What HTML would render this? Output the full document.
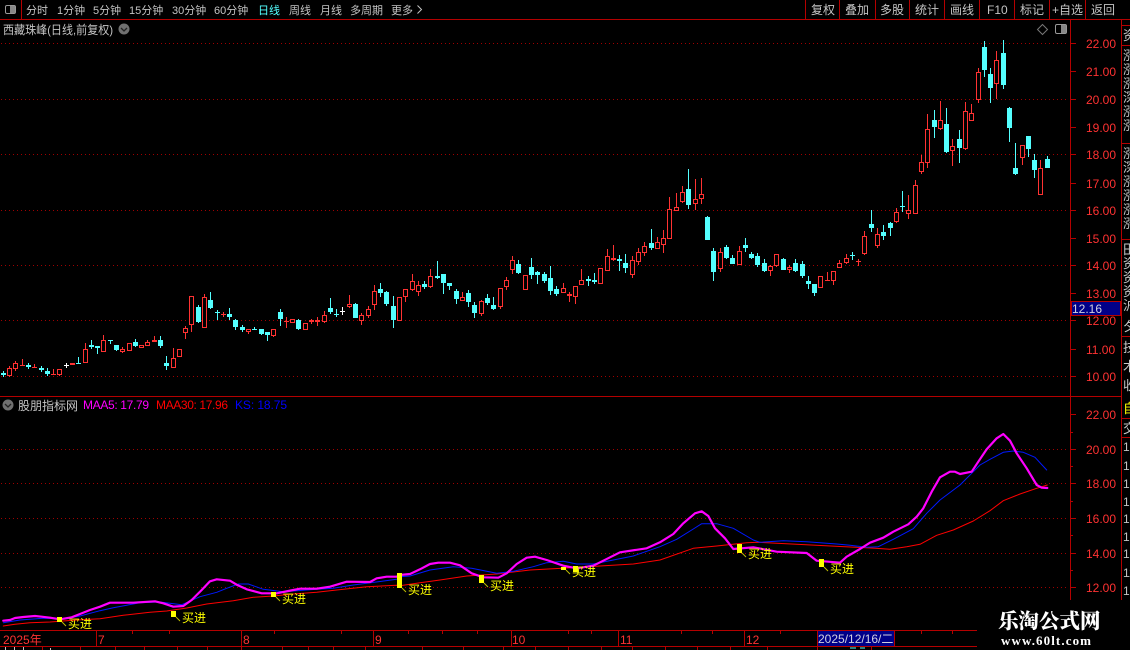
<!DOCTYPE html>
<html>
<head>
<meta charset="utf-8">
<title>股票K线</title>
<style>
html,body{margin:0;padding:0;background:#000;width:1130px;height:650px;overflow:hidden}
svg{display:block;position:absolute;left:0;top:0}
text{font-family:"Liberation Sans","WenQuanYi Zen Hei","Noto Sans CJK SC",sans-serif}
.t{font-size:11px;fill:#c4c4c4}
.r{font-size:12px;fill:#c4c4c4}
.p{font-size:12px;fill:#ff3232}
.y{font-size:12px;fill:#ffff00}
.d{font-size:12px;fill:#ff3232}
.s{font-size:13px;fill:#c8c8c8}
.f{stroke:#b40000;stroke-width:1;fill:none;shape-rendering:crispEdges}
</style>
</head>
<body>
<svg width="1130" height="650" viewBox="0 0 1130 650" xmlns="http://www.w3.org/2000/svg">
<defs>
<pattern id="dot" x="0" y="0" width="4" height="1" patternUnits="userSpaceOnUse"><rect x="1" y="0" width="1" height="1" fill="#a00000"/></pattern>
</defs>
<rect width="1130" height="650" fill="#000"/>

<!-- frame -->
<path class="f" d="M0 19.5H1130M0 396.5H1122M21.5 0V19M805.5 0V19M839.5 0V19M875.5 0V19M909.5 0V19M944.5 0V19M979.5 0V19M1014.5 0V19M1049.5 0V19M1085.5 0V19"/>
<path class="f" d="M1070.5 19V600M1121.5 19V600"/>
<path class="f" d="M1122 25.5H1130M1122 45.5H1130M1122 143.5H1130M1122 239.5H1130M1122 336.5H1130M1122 418.5H1130M1122 437.5H1130"/>
<path class="f" d="M1071 43.5h5M1071 71.5h5M1071 99.5h5M1071 127.5h5M1071 154.5h5M1071 183.5h5M1071 210.5h5M1071 238.5h5M1071 265.5h5M1071 293.5h5M1071 320.5h5M1071 349.5h5M1071 376.5h5"/>
<path class="f" d="M1071 414.5h5M1071 432.5h2M1071 449.5h5M1071 466.5h2M1071 483.5h5M1071 501.5h2M1071 518.5h5M1071 535.5h2M1071 553.5h5M1071 570.5h2M1071 587.5h5"/>
<!-- grid -->
<g fill="url(#dot)" shape-rendering="crispEdges">
<rect x="0" y="43" width="1068" height="1"/><rect x="0" y="99" width="1068" height="1"/><rect x="0" y="154" width="1068" height="1"/><rect x="0" y="210" width="1068" height="1"/><rect x="0" y="265" width="1068" height="1"/><rect x="0" y="320" width="1068" height="1"/><rect x="0" y="376" width="1068" height="1"/>
<rect x="0" y="449" width="1068" height="1"/><rect x="0" y="483" width="1068" height="1"/><rect x="0" y="518" width="1068" height="1"/><rect x="0" y="553" width="1068" height="1"/><rect x="0" y="587" width="1068" height="1"/>
</g>

<!-- toolbar left -->
<rect x="5.5" y="5.5" width="10" height="8" rx="1.5" fill="none" stroke="#999"/>
<rect x="10" y="6" width="5" height="7" fill="#888"/>
<text class="t" x="26" y="14">分时</text>
<text class="t" x="57" y="14">1分钟</text>
<text class="t" x="93" y="14">5分钟</text>
<text class="t" x="129" y="14">15分钟</text>
<text class="t" x="172" y="14">30分钟</text>
<text class="t" x="214" y="14">60分钟</text>
<text class="t" x="258" y="14" style="fill:#54ffff">日线</text>
<text class="t" x="289" y="14">周线</text>
<text class="t" x="320" y="14">月线</text>
<text class="t" x="350" y="14">多周期</text>
<text class="t" x="391" y="14">更多</text>
<path d="M417.5 5.5L421.5 9.5L417.5 13.5" fill="none" stroke="#c4c4c4"/>

<!-- toolbar right -->
<text class="r" x="811" y="14">复权</text>
<text class="r" x="845" y="14">叠加</text>
<text class="r" x="880" y="14">多股</text>
<text class="r" x="915" y="14">统计</text>
<text class="r" x="950" y="14">画线</text>
<text class="r" x="987" y="14">F10</text>
<text class="r" x="1020" y="14">标记</text>
<text class="r" x="1052" y="14">+自选</text>
<text class="r" x="1091" y="14">返回</text>

<!-- title -->
<text class="r" x="3" y="34" textLength="110" lengthAdjust="spacingAndGlyphs">西藏珠峰(日线,前复权)</text>
<circle cx="124" cy="29" r="5.5" fill="#707070"/>
<path d="M121 28l3 3 3-3" fill="none" stroke="#222" stroke-width="1.3"/>
<path d="M1042.5 24.5l5 5-5 5-5-5z" fill="none" stroke="#777"/>
<rect x="1055.5" y="24.5" width="11" height="9" rx="1.5" fill="none" stroke="#999"/>
<rect x="1061" y="25" width="5" height="8" fill="#888"/>

<!-- main axis labels -->
<text class="p" x="1086" y="48">22.00</text>
<text class="p" x="1086" y="76">21.00</text>
<text class="p" x="1086" y="104">20.00</text>
<text class="p" x="1086" y="132">19.00</text>
<text class="p" x="1086" y="159">18.00</text>
<text class="p" x="1086" y="188">17.00</text>
<text class="p" x="1086" y="215">16.00</text>
<text class="p" x="1086" y="243">15.00</text>
<text class="p" x="1086" y="270">14.00</text>
<text class="p" x="1086" y="298">13.00</text>
<text class="p" x="1086" y="325">12.00</text>
<text class="p" x="1086" y="354">11.00</text>
<text class="p" x="1086" y="381">10.00</text>
<rect x="1071.5" y="301.5" width="49" height="14" fill="#000088" stroke="#b40000"/>
<text x="1072" y="313" style="font-size:12px;fill:#d0d0e0">12.16</text>

<!-- lower axis labels -->
<text class="p" x="1086" y="419">22.00</text>
<text class="p" x="1086" y="454">20.00</text>
<text class="p" x="1086" y="488">18.00</text>
<text class="p" x="1086" y="523">16.00</text>
<text class="p" x="1086" y="558">14.00</text>
<text class="p" x="1086" y="592">12.00</text>

<!-- candles & lines drawn here -->
<g id="candles" shape-rendering="crispEdges"></g>
<g id="lines" fill="none" stroke-linejoin="round" stroke-linecap="round"></g>

<!-- lower title -->
<circle cx="8" cy="405" r="5.5" fill="#707070"/>
<path d="M5 404l3 3 3-3" fill="none" stroke="#222" stroke-width="1.3"/>
<text class="r" x="18" y="410">股朋指标网</text>
<text x="83" y="409" textLength="66" style="font-size:12px;fill:#ff00ff">MAA5: 17.79</text>
<text x="156" y="409" textLength="72" style="font-size:12px;fill:#ff0000">MAA30: 17.96</text>
<text x="235" y="409" textLength="52" style="font-size:12px;fill:#0000ff">KS: 18.75</text>

<!-- buy markers -->
<g fill="#ffff00" shape-rendering="crispEdges">
<rect x="57" y="617" width="5" height="5"/>
<rect x="171" y="611" width="5" height="6"/>
<rect x="271" y="592" width="5" height="5"/>
<rect x="397" y="573" width="5" height="15"/>
<rect x="479" y="575" width="5" height="8"/>
<rect x="561" y="567" width="5" height="3"/>
<rect x="573" y="566" width="5" height="6"/>
<rect x="737" y="544" width="5" height="9"/>
<rect x="819" y="559" width="5" height="8"/>
</g>
<path d="M62 622l4 4M176 617l4 4M276 597l4 4M402 588l4 4M484 583l4 4M566 570l4 4M578 572l-1 1M742 553l4 4M824 567l4 4" stroke="#bbbb00" fill="none"/>
<text class="y" x="68" y="628">买进</text>
<text class="y" x="182" y="622">买进</text>
<text class="y" x="282" y="603">买进</text>
<text class="y" x="408" y="594">买进</text>
<text class="y" x="490" y="590">买进</text>
<text class="y" x="572" y="576">买进</text>
<text class="y" x="748" y="558">买进</text>
<text class="y" x="830" y="573">买进</text>

<!-- time axis -->
<path class="f" d="M0 630.5H977M0 646.5H977M96.5 630V646M241.5 630V646M373.5 630V646M511.5 630V646M618.5 630V646M744.5 630V646M817.5 630V646M894.5 630V646"/>
<path class="f" d="M132.5 631v3M169.5 631v3M274.5 631v3M341.5 631v3M408.5 631v3M442.5 631v3M477.5 631v3M568.5 631v3M591.5 631v3M681.5 631v3M712.5 631v3M780.5 631v3M921.5 631v3M952.5 631v3"/>
<path class="f" d="M42.5 647v3M80.5 647v3M115.5 647v3M144.5 647v3M177.5 647v3M207.5 647v3M241.5 647v3M282.5 647v3M308.5 647v3M333.5 647v3M365.5 647v3M422.5 647v3M463.5 647v3M503.5 647v3M535.5 647v3M568.5 647v3M601.5 647v3M632.5 647v3M665.5 647v3M697.5 647v3M730.5 647v3M767.5 647v3M817.5 647v3M871.5 647v3"/>
<text class="d" x="3" y="644">2025年</text>
<text class="d" x="98" y="644">7</text>
<text class="d" x="243" y="644">8</text>
<text class="d" x="375" y="644">9</text>
<text class="d" x="512" y="644">10</text>
<text class="d" x="620" y="644">11</text>
<text class="d" x="746" y="644">12</text>
<rect x="818" y="631" width="76" height="15" fill="#000088"/>
<text x="818" y="643" style="font-size:12px;fill:#d0d0e0">2025/12/16/二</text>
<path d="M5.5 647v3M14.5 647v3M23.5 647v3M50.5 648v2" stroke="#c4c4c4" fill="none"/>
<path d="M850 648h6M860 648h5" stroke="#54ffff" fill="none"/>

<!-- right strip clipped text -->
<defs><clipPath id="cp"><rect x="1122" y="20" width="8" height="580"/></clipPath></defs>
<g clip-path="url(#cp)">
<text class="s" x="1123" y="40">资</text>
<text class="s" x="1123" y="60">涨</text>
<text class="s" x="1123" y="74">涨</text>
<text class="s" x="1123" y="88">涨</text>
<text class="s" x="1123" y="102">深</text>
<text class="s" x="1123" y="116">涨</text>
<text class="s" x="1123" y="130">涨</text>
<text class="s" x="1123" y="158">涨</text>
<text class="s" x="1123" y="172">深</text>
<text class="s" x="1123" y="186">涨</text>
<text class="s" x="1123" y="200">涨</text>
<text class="s" x="1123" y="214">涨</text>
<text class="s" x="1123" y="228">涨</text>
<text class="s" x="1123" y="254">田</text>
<text class="s" x="1123" y="268">资</text>
<text class="s" x="1123" y="282">资</text>
<text class="s" x="1123" y="296">资</text>
<text class="s" x="1123" y="310">沪</text>
<text class="s" x="1123" y="331">夕</text>
<text class="s" x="1123" y="352">技</text>
<text class="s" x="1123" y="371">术</text>
<text class="s" x="1123" y="390">收</text>
<text x="1123" y="413" style="font-size:13px;fill:#ffff00">自</text>
<text class="s" x="1123" y="433">交</text>
<text x="1123" y="451" class="r">18.5</text>
<text x="1123" y="470" class="r">17.2</text>
<text x="1123" y="488" class="r">16.8</text>
<text x="1123" y="506" class="r">15.1</text>
<text x="1123" y="523" class="r">14.9</text>
<text x="1123" y="541" class="r">13.6</text>
<text x="1123" y="558" class="r">12.7</text>
<text x="1123" y="577" class="r">11.4</text>
<text x="1123" y="595" class="r">10.3</text>
</g>

<!-- watermark -->
<rect x="978" y="600" width="152" height="50" fill="#000"/>
<text x="998" y="628" style='font-family:"Noto Serif CJK SC","Liberation Serif",serif;font-size:20.5px;font-weight:900;fill:#fff'>乐淘公式网</text>
<text x="1001" y="645" textLength="90" style='font-family:"Liberation Serif",serif;font-size:13px;font-weight:bold;fill:#fff'>www.60lt.com</text>
</svg>

<script>
(function(){
var D=[
"c371,373,375,377","r366,368,376,377","r361,363,369,371","r359,365,366,366","c363,365,367,369","r364,367,368,368","c366,368,370,372","c368,371,374,376","r369,374,375,375","r369,369,375,376",
"w363,365,366,368","r363,363,365,365","c357,363,364,364","r343,349,363,363","c340,345,347,349","c346,346,348,354","r335,340,352,352","c340,340,341,344","c345,345,350,351","r347,349,352,353",
"r343,343,351,351","c339,342,346,347","r345,345,348,348","r340,342,346,346","r336,340,342,342","c336,340,346,348","c356,363,366,370","r348,358,368,368","r349,349,357,357","r326,328,333,339",
"r296,296,325,332","c305,307,322,323","r294,297,328,328","c292,300,308,309","c310,312,313,320","r312,314,315,317","c308,314,317,320","c319,320,327,330","c325,327,330,332","r329,329,332,334",
"c327,329,330,330","c329,329,334,335","c332,332,335,341","r329,329,336,337",
"c309,312,319,326","r317,321,322,328","r319,319,323,323","c319,320,329,330","r323,323,330,330","r319,320,322,324","r317,320,322,326","r311,315,322,323","c298,308,312,314","c309,314,315,317",
"w307,311,312,315","r295,304,307,308","c303,304,318,318","r313,315,321,325","r306,309,316,318","r285,291,305,310","c283,289,293,297","c291,292,304,306","c296,306,320,328","r297,297,321,321",
"r289,289,297,302","r274,281,290,291","r281,285,292,296","c281,284,287,289","r269,276,287,288","c261,276,278,279","c274,274,283,294","c283,283,286,290","c289,291,299,304","r292,297,301,301",
"c290,293,302,307","c302,305,313,318","r300,301,314,316","c294,298,303,305","c297,305,309,310","r288,288,307,309","r277,280,287,290","r256,260,270,274","c260,264,273,274","r275,275,290,290",
"c258,267,275,279","c271,272,275,284","c272,274,281,283","c266,278,291,295","c286,289,294,296",
"r283,288,293,293","r292,294,296,302","r286,286,297,304","r269,280,285,285","c276,279,281,286","c273,280,282,284","r268,268,284,284","r249,256,271,271","r245,258,260,261","c255,259,261,271",
"c254,263,268,273","r256,260,275,278","r248,252,262,265","r242,246,253,256","c229,243,248,250","r237,242,249,249","r230,238,245,253","r197,209,239,239","r193,207,211,211","r186,192,202,203",
"c169,189,205,209","r179,199,204,210","r178,194,199,204","c216,217,240,240","c248,251,272,281","r248,252,269,272","c245,247,258,259","c255,258,264,264","r246,251,265,265","c238,245,248,252",
"c252,254,258,259","c253,256,265,267","c259,263,271,272","r265,266,271,276","r254,254,266,267","c258,259,270,270","r265,267,270,273","c259,263,271,272","c261,264,276,278","c276,281,284,289",
"c284,284,293,296","r276,276,288,288","r272,280,281,281","r271,271,281,285","r260,263,268,268","r254,258,263,264","c252,255,256,260","r259,261,262,266",
"r231,236,254,255","c210,224,228,232","r228,234,246,248","c225,232,236,240","c222,223,228,236","r208,212,222,223","c191,206,207,212","r195,210,214,219","r180,185,214,214","r155,162,172,174",
"r114,129,163,168","c110,120,127,138","r101,120,129,130","c108,124,152,153","r139,146,151,166","c130,139,148,163","r102,111,149,150","r104,113,121,121","r68,72,100,103","c41,47,70,77",
"c68,74,88,103","r51,60,84,99","c40,53,85,89","c107,108,128,142","c143,168,174,175","r145,145,158,165","c136,136,149,157","c154,160,170,178","r160,168,195,195","c156,159,168,168"
];
var COL={c:"#54ffff",r:"#ff3232",w:"#ffffff"},h="";
for(var i=0;i<D.length;i++){
 var t=D[i][0],a=D[i].slice(1).split(",").map(Number),hi=a[0],bt=a[1],bb=a[2],lo=a[3];
 var X=Math.floor(3.3+6.289*i),c=COL[t];
 h+='<rect x="'+X+'" y="'+hi+'" width="1" height="'+Math.max(lo-hi,1)+'" fill="'+c+'"/>';
 var bh=Math.max(bb-bt,1);
 if(t=="r"&&bh>=3){
  h+='<rect x="'+(X-2)+'" y="'+bt+'" width="5" height="'+bh+'" fill="#000"/>';
  h+='<rect x="'+(X-1.5)+'" y="'+(bt+.5)+'" width="4" height="'+(bh-1)+'" fill="none" stroke="'+c+'"/>';
 }else{
  h+='<rect x="'+(X-2)+'" y="'+bt+'" width="5" height="'+bh+'" fill="'+c+'"/>';
 }
}
document.getElementById("candles").innerHTML=h;

function M(list,ox,oy){var s=[];for(var k=0;k<list.length;k+=2){s.push((ox+list[k]/3).toFixed(1)+","+(oy+list[k+1]/3).toFixed(1));}return s.join(" ");}
var mag=[M([10,242,30,240,45,234,70,231,105,228,125,230,150,233,180,238,215,232,240,222,270,210,300,200,330,188,400,188,465,184,490,190,520,200,550,198,575,180,605,150,630,124,650,118,690,122,710,134,740,148,785,160,830,160,880,150,900,146,950,146,990,140,1040,125,1110,126,1130,115,1160,110,1190,110],0,540),
M([0,225,30,222,60,208,90,192,115,188,150,188,180,196,215,220,250,232,295,233,320,220,350,192,380,173,405,170,440,180,490,197,530,205,580,197,660,157,740,145,780,127,820,102,850,70,885,40,905,34,925,48,945,85,975,115,1000,147,1060,142,1130,155,1220,159,1250,182,1320,188,1340,170],400,500),
M([30,477,60,458,100,443,130,425,175,403,200,380,220,355,245,305,270,262,300,245,315,245,330,252,365,245,385,215,410,178,440,145,460,132,480,152,500,190,530,235,560,285,575,293,592,294],850,390)].join(" ");
var blu=[M([10,248,60,240,130,235,190,236,240,228,300,212,340,203,420,188,480,186,545,194,600,170,650,157,680,145,715,132,745,132,790,148,850,155,950,148,1000,145,1060,135,1190,118],0,540),
M([0,230,30,228,90,210,160,200,215,205,290,220,340,214,400,200,440,188,490,184,530,192,580,192,640,180,700,168,780,140,830,118,880,87,905,71,950,71,1000,85,1060,120,1080,127,1150,122,1220,125,1310,132],400,500),
M([0,466,50,472,85,470,130,448,190,416,230,370,270,330,330,285,365,250,390,225,420,208,460,187,490,183,520,187,555,202,590,240],850,390)].join(" ");
var red=[M([10,258,45,253,90,248,150,246,230,240,300,236,370,226,450,217,500,213,560,204,620,192,700,182,760,172,820,168,880,162,950,157,1010,150,1100,140,1190,136],0,540),
M([0,257,60,248,120,240,200,228,290,222,390,210,500,204,600,198,700,192,780,180,880,145,950,138,1040,128,1075,127],400,500),
M([75,475,120,478,170,470,210,463,260,436,310,420,370,393,420,362,460,332,510,312,560,295,592,285],850,390)].join(" ");
document.getElementById("lines").innerHTML=
'<polyline points="'+red+'" stroke="#ff0000" stroke-width="1"/>'+
'<polyline points="'+blu+'" stroke="#0018ff" stroke-width="1"/>'+
'<polyline points="'+mag+'" stroke="#ff00ff" stroke-width="2.2"/>';
})();
</script>
</body>
</html>
